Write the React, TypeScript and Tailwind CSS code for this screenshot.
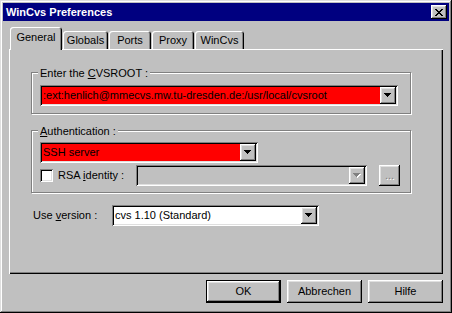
import React from 'react';

const raised =
  'shadow-[inset_-1px_-1px_#000,inset_1px_1px_#fff,inset_-2px_-2px_#808080,inset_2px_2px_#dfdfdf]';
const sunken =
  'shadow-[inset_1px_1px_#808080,inset_-1px_-1px_#fff,inset_2px_2px_#000,inset_-2px_-2px_#dfdfdf]';

const Arrow: React.FC<{ disabled?: boolean }> = ({ disabled }) => (
  <svg width="8" height="5" viewBox="0 0 8 5" shapeRendering="crispEdges">
    {disabled && <polygon points="1,1 8,1 4.5,5" fill="#fff" />}
    <polygon points="0,0 7,0 3.5,4" fill={disabled ? '#808080' : '#000'} />
  </svg>
);

const Combo: React.FC<{ w: string; bg: string; value?: string; disabled?: boolean }> = ({ w, bg, value, disabled }) => (
  <div className={`${w} h-[21px] flex p-[2px] ${sunken}`}>
    <div className={`flex-1 flex items-center pl-[1px] whitespace-nowrap overflow-hidden ${bg}`}>{value}</div>
    <div className={`w-[16px] h-[17px] flex items-center justify-center bg-[#c0c0c0] ${raised}`}>
      <Arrow disabled={disabled} />
    </div>
  </div>
);

const tabs = [
  { label: 'Globals', w: 'w-[45px]' },
  { label: 'Ports', w: 'w-[42px]' },
  { label: 'Proxy', w: 'w-[42px]' },
  { label: 'WinCvs', w: 'w-[49px]' },
];

const App: React.FC = () => {
  return (
    <div className="w-[452px] h-[313px] bg-[#c0c0c0] p-[3px] flex flex-col font-['Liberation_Sans',Arial,sans-serif] text-[11px] text-black shadow-[inset_-1px_-1px_#000,inset_1px_1px_#dfdfdf,inset_-2px_-2px_#808080,inset_2px_2px_#fff]">
      {/* Title bar */}
      <div className="h-[18px] bg-[#000080] flex items-center justify-between pl-[3px] pr-[2px]">
        <span className="text-white font-bold text-[11px]">WinCvs Preferences</span>
        <div className={`w-[16px] h-[14px] bg-[#c0c0c0] flex items-center justify-center ${raised}`}>
          <svg width="8" height="7" viewBox="0 0 8 7" shapeRendering="crispEdges" fill="#000">
            <rect x="0" y="0" width="2" height="1" />
            <rect x="6" y="0" width="2" height="1" />
            <rect x="1" y="1" width="2" height="1" />
            <rect x="5" y="1" width="2" height="1" />
            <rect x="2" y="2" width="4" height="1" />
            <rect x="3" y="3" width="2" height="1" />
            <rect x="2" y="4" width="4" height="1" />
            <rect x="1" y="5" width="2" height="1" />
            <rect x="5" y="5" width="2" height="1" />
            <rect x="0" y="6" width="2" height="1" />
            <rect x="6" y="6" width="2" height="1" />
          </svg>
        </div>
      </div>

      {/* Tabs */}
      <div className="mt-[6px] ml-[7px] h-[22px] flex items-end">
        <div className="relative z-10 -mb-px w-[52px] h-[23px] pb-[3px] bg-[#c0c0c0] rounded-t-[3px] flex items-center justify-center shadow-[inset_1px_1px_#fff,inset_-1px_0_#000,inset_-2px_0_#808080]">
          General
        </div>
        {tabs.map((t) => (
          <div
            key={t.label}
            className={`${t.w} h-[18px] ml-px rounded-t-[3px] flex items-center justify-center shadow-[inset_1px_1px_#fff,inset_-1px_0_#000,inset_-2px_0_#808080]`}
          >
            {t.label}
          </div>
        ))}
      </div>

      {/* Panel */}
      <div className="ml-[6px] w-[434px] h-[225px] pt-[23px] pl-[22px] flex flex-col shadow-[inset_1px_1px_#fff,inset_-1px_-1px_#000,inset_-2px_-2px_#808080]">
        <div className="relative w-[380px] h-[42px] border border-[#808080] shadow-[inset_1px_1px_#fff,1px_1px_#fff] pl-[8px] pt-[12px]">
          <span className="absolute left-[6px] -top-[8px] px-[2px] bg-[#c0c0c0]">
            Enter the <span className="underline">C</span>VSROOT :
          </span>
          <Combo w="w-[358px]" bg="bg-[#ff0000]" value=":ext:henlich@mmecvs.mw.tu-dresden.de:/usr/local/cvsroot" />
        </div>

        <div className="relative mt-[16px] w-[380px] h-[63px] border border-[#808080] shadow-[inset_1px_1px_#fff,1px_1px_#fff] pl-[8px] pt-[11px]">
          <span className="absolute left-[6px] -top-[8px] px-[2px] bg-[#c0c0c0]">
            <span className="underline">A</span>uthentication :
          </span>
          <Combo w="w-[218px]" bg="bg-[#ff0000]" value="SSH server" />
          <div className="mt-[2px] h-[21px] flex items-center">
            <div className={`w-[13px] h-[13px] bg-white ${sunken}`} />
            <span className="ml-[5px] w-[78px]">
              RSA <span className="underline">i</span>dentity :
            </span>
            <Combo w="w-[231px]" bg="bg-[#c0c0c0]" disabled />
            <div className={`ml-[12px] w-[21px] h-[21px] flex items-center justify-center text-[#808080] [text-shadow:1px_1px_#fff] ${raised}`}>
              ...
            </div>
          </div>
        </div>

        <div className="mt-[12px] ml-[2px] flex items-center">
          <span className="w-[79px]">
            Use <span className="underline">v</span>ersion :
          </span>
          <Combo w="w-[207px]" bg="bg-white" value="cvs 1.10 (Standard)" />
        </div>
      </div>

      {/* Buttons */}
      <div className="mt-[6px] ml-[6px] w-[434px] flex justify-end gap-[6px]">
        <div className="w-[75px] h-[23px] border border-black">
          <div className={`w-full h-full flex items-center justify-center ${raised}`}>OK</div>
        </div>
        <div className={`w-[75px] h-[23px] flex items-center justify-center ${raised}`}>Abbrechen</div>
        <div className={`w-[75px] h-[23px] flex items-center justify-center ${raised}`}>Hilfe</div>
      </div>
    </div>
  );
};

export default App;
